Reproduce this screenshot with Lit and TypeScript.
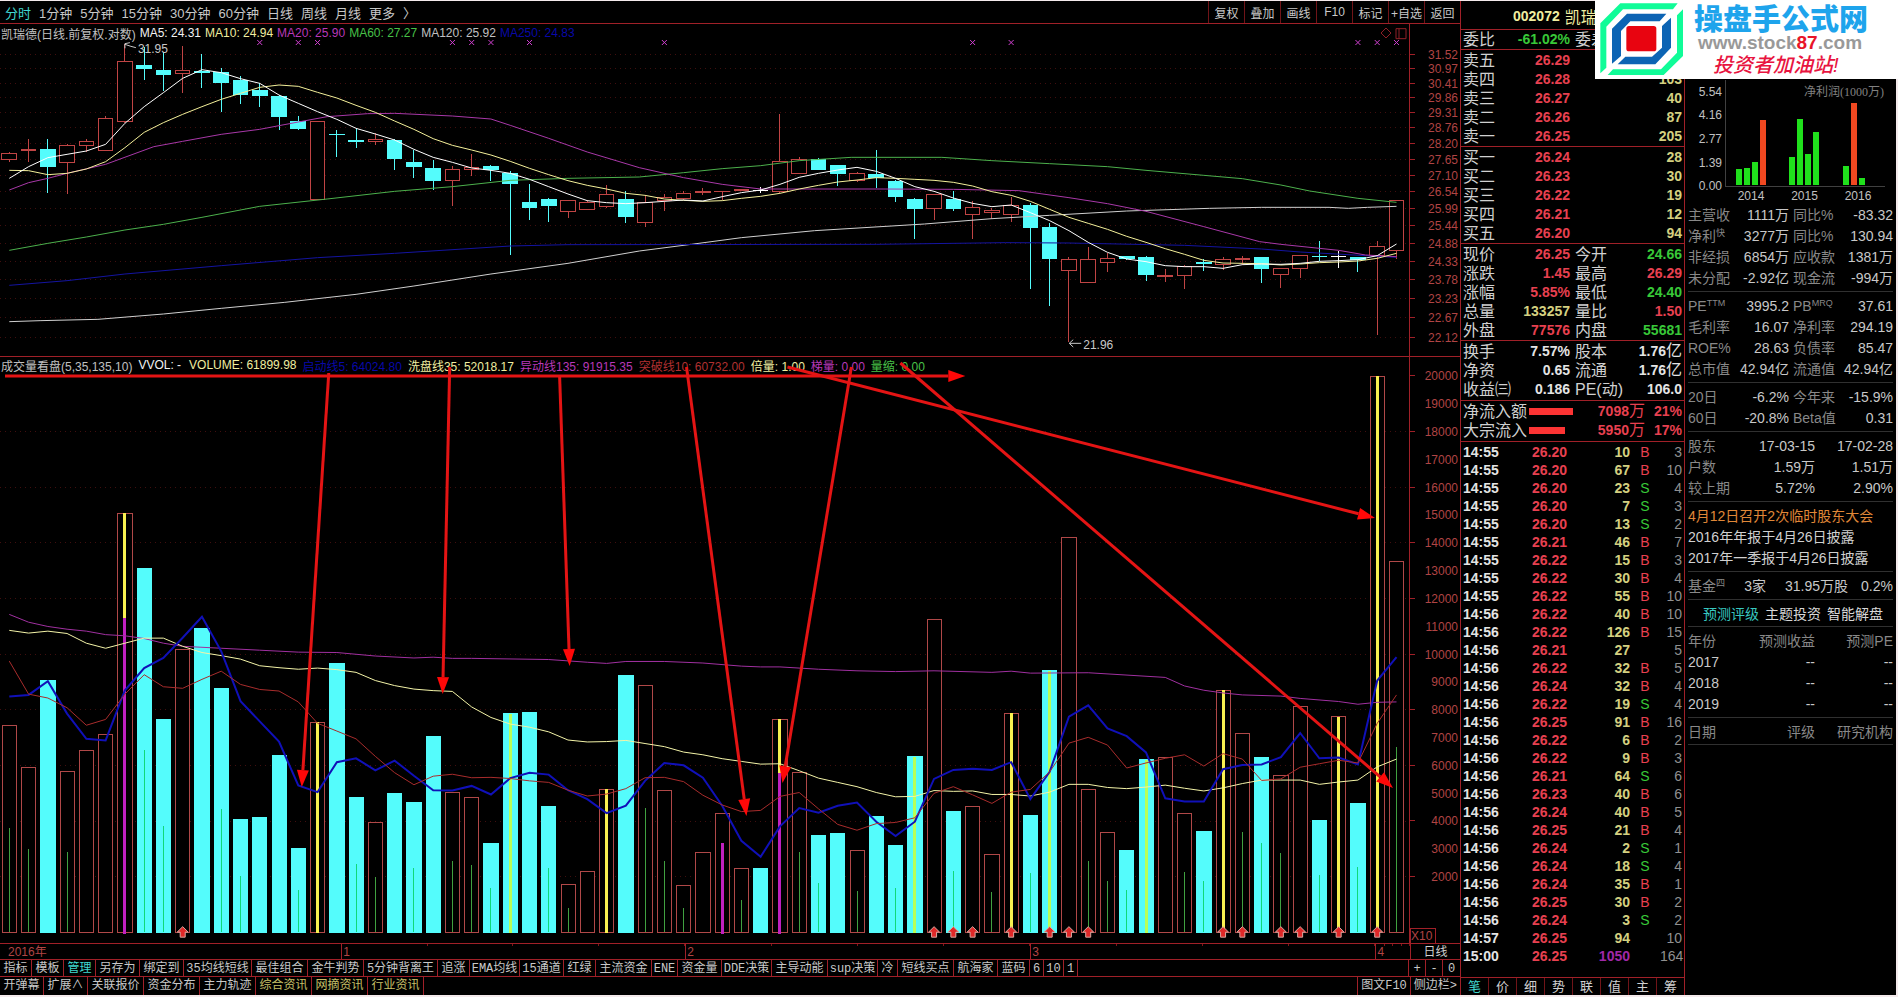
import { LitElement, html, svg, css } from "lit";
import { customElement, state } from "lit/decorators.js";
import { classMap } from "lit/directives/class-map.js";

type Kind = "r" | "c" | "w";
// kind, body top, body bottom, high, low
type Candle = [Kind, number, number, number, number];
// kind, top, extras: g = green needle, y = yellow core, m = magenta core, a = arrow marker
type VolBar = [Kind, number, { g?: number; y?: number; m?: number; a?: number }?];

const STEP = 19.28;
const cx = (i: number) => 9.3 + STEP * i;

const CANDLES: Candle[] = [
  ["r", 460, 479, 455, 485], ["r", 448, 452, 417, 485], ["c", 447, 498, 417, 579], ["r", 436, 488, 432, 582],
  ["r", 423, 437, 417, 455], ["r", 355, 452, 348, 452], ["r", 184, 364, 132, 368], ["c", 195, 204, 140, 240],
  ["c", 210, 224, 155, 272], ["r", 211, 219, 137, 280], ["c", 214, 216, 162, 264], ["c", 216, 246, 205, 336],
  ["c", 240, 282, 228, 312], ["c", 270, 285, 250, 320], ["c", 289, 348, 285, 390], ["c", 364, 384, 348, 390],
  ["r", 364, 598, 364, 598], ["c", 402, 404, 390, 470], ["c", 421, 423, 385, 444], ["r", 418, 425, 400, 434],
  ["c", 421, 474, 418, 510], ["c", 486, 498, 450, 535], ["c", 504, 540, 480, 570], ["r", 508, 542, 498, 618],
  ["r", 502, 508, 463, 528], ["c", 498, 509, 494, 543], ["c", 519, 551, 513, 765], ["c", 606, 621, 552, 660],
  ["c", 597, 617, 594, 665], ["r", 602, 635, 600, 655], ["r", 606, 629, 600, 629], ["r", 583, 620, 555, 625],
  ["c", 597, 650, 572, 669], ["r", 608, 668, 585, 680], ["r", 592, 600, 582, 633], ["r", 579, 594, 572, 600],
  ["r", 575, 578, 565, 585], ["r", 573, 575, 573, 600], ["r", 568, 571, 568, 571], ["w", 570, 572, 560, 580],
  ["r", 484, 574, 342, 580], ["r", 479, 521, 472, 521], ["c", 479, 507, 474, 510], ["c", 495, 521, 495, 558],
  ["r", 520, 541, 515, 547], ["c", 522, 532, 450, 565], ["c", 543, 588, 540, 605], ["c", 597, 624, 594, 717],
  ["r", 583, 626, 583, 660], ["c", 597, 624, 573, 632], ["r", 622, 643, 603, 717], ["r", 632, 636, 625, 658],
  ["r", 615, 643, 590, 665], ["c", 615, 681, 610, 867], ["c", 681, 776, 670, 917], ["r", 778, 811, 770, 1025],
  ["r", 778, 848, 740, 848], ["r", 776, 787, 760, 815], ["c", 768, 776, 768, 780], ["c", 773, 822, 768, 843],
  ["r", 826, 830, 808, 847], ["r", 800, 827, 795, 867], ["c", 786, 791, 778, 812], ["r", 777, 794, 770, 810],
  ["r", 774, 778, 768, 795], ["c", 773, 806, 773, 849], ["r", 806, 823, 806, 863], ["r", 766, 805, 766, 833],
  ["c", 768, 770, 723, 782], ["w", 768, 770, 753, 803], ["c", 771, 777, 771, 815], ["r", 739, 767, 723, 1005],
  ["r", 601, 751, 601, 777],
];

const MA5 = [535, 500, 473, 463, 453, 433, 370, 320, 278, 235, 209, 218, 236, 250, 285, 310, 335, 358, 385, 402, 420, 448, 472, 487, 504, 511, 520, 538, 560, 582, 602, 608, 611, 608, 604, 600, 603, 590, 578, 570, 553, 532, 520, 510, 502, 514, 535, 560, 574, 594, 610, 620, 615, 638, 662, 692, 727, 757, 777, 785, 797, 800, 800, 805, 794, 792, 793, 790, 784, 782, 779, 767, 732];
const MA10 = [511, 512, 524, 520, 507, 485, 443, 397, 368, 343, 320, 298, 280, 262, 255, 259, 277, 294, 316, 337, 363, 388, 416, 436, 450, 465, 484, 505, 524, 542, 556, 567, 580, 586, 597, 601, 604, 602, 595, 589, 580, 567, 556, 546, 540, 533, 535, 538, 541, 547, 558, 575, 586, 604, 628, 652, 670, 688, 709, 727, 746, 763, 781, 789, 790, 791, 795, 792, 788, 786, 783, 775, 760];

type Knots = [number, number][];
const MA20: Knots = [[0, 570], [1, 548], [2, 535], [3, 520], [5, 493], [7.5, 440], [9, 424], [11, 403], [13, 388], [15, 366], [16.5, 350], [18.6, 341], [20, 340], [23, 348], [25, 357], [26, 376], [28, 415], [30, 456], [32.7, 503], [35, 533], [37, 553], [39, 567], [45.4, 567], [49, 568], [52.4, 572], [55, 593], [57, 611], [59, 634], [62, 680], [64.9, 725], [66, 733], [69, 751], [70.4, 765], [72, 770]];
const MA60: Knots = [[0, 751], [2, 730], [4, 711], [6, 690], [8, 673], [10, 652], [13, 619], [16.5, 597], [20, 574], [23, 560], [26, 541], [29, 535], [32.7, 531], [35, 518], [37, 506], [39, 497], [41, 482], [43.7, 472], [48.4, 472], [51, 482], [54, 491], [57, 500], [59, 511], [62, 526], [64, 536], [66, 555], [67.5, 573], [70, 595], [72, 607]];
const MA120: Knots = [[0, 965], [1.6, 962], [4.6, 958], [8, 942], [11, 925], [14.3, 907], [18, 883], [21, 858], [25, 822], [29, 790], [32.7, 753], [35.4, 733], [38, 713], [41.8, 692], [47.5, 672], [51, 656], [54, 646], [58, 633], [62.3, 625], [65, 622], [68.5, 622], [69.5, 625], [70.5, 622], [72, 619]];
const MA250: Knots = [[0, 856], [3, 842], [6, 822], [11, 797], [16, 773], [20, 760], [26, 738], [29, 734], [45, 733], [51.7, 728], [55, 729], [61, 736], [65, 747], [67, 756], [70.4, 767], [72, 772]];

const VOLS: VolBar[] = [
  ["r", 965, { g: 1230 }], ["r", 1073, { g: 1283 }], ["c", 851], ["r", 1083, { g: 1290 }], ["r", 1031], ["r", 990],
  ["r", 420, { y: 1, m: 689 }], ["c", 563, { g: 1028 }], ["c", 951, { g: 1225 }], ["r", 769, { a: 1 }], ["c", 715],
  ["c", 871, { g: 1180 }], ["c", 1208, { g: 1352 }], ["c", 1203], ["c", 1044], ["c", 1283, { g: 1388 }], ["r", 957, { y: 1 }],
  ["c", 807], ["c", 1152, { g: 1322 }], ["r", 1214, { g: 1355 }], ["c", 1141], ["c", 1164, { g: 1332 }], ["c", 995],
  ["r", 1137, { g: 1315 }], ["r", 1152, { g: 1325 }], ["c", 1270, { g: 1383 }], ["c", 936, { y: 1 }], ["c", 931],
  ["c", 1175, { g: 1333 }], ["r", 1374, { g: 1435 }], ["r", 1342], ["r", 1129, { y: 1 }], ["c", 838], ["r", 862, { g: 1177 }],
  ["r", 1132, { g: 1313 }], ["r", 1376, { g: 1435 }], ["r", 1291], ["r", 1191, { m: 1267 }], ["r", 1334, { g: 1415 }],
  ["c", 1334], ["r", 949, { y: 1, m: 1088 }], ["r", 1087, { g: 1290 }], ["c", 1249, { g: 1370 }], ["c", 1244],
  ["r", 1286, { g: 1390 }], ["c", 1200], ["c", 1275, { g: 1383 }], ["c", 1046, { y: 1 }], ["r", 692, { a: 1 }],
  ["c", 1188, { g: 1340, a: 1 }], ["r", 1173, { a: 1 }], ["r", 1297, { g: 1395 }], ["r", 934, { y: 1, a: 1 }],
  ["c", 1198, { g: 1345 }], ["c", 825, { y: 1, a: 1 }], ["r", 482, { a: 1 }], ["r", 1129, { g: 1313, a: 1 }],
  ["r", 1240, { g: 1365 }], ["c", 1288, { g: 1388 }], ["c", 1054, { y: 1 }], ["r", 1047], ["r", 1191, { g: 1342 }],
  ["c", 1239, { g: 1365 }], ["r", 875, { y: 1, a: 1 }], ["r", 985, { g: 1240, a: 1 }], ["c", 1049, { g: 1268 }],
  ["r", 1093, { g: 1293, a: 1 }], ["r", 918, { a: 1 }], ["c", 1211, { g: 1350 }], ["r", 943, { y: 1, a: 1 }],
  ["c", 1167, { g: 1330 }], ["r", 67, { y: 1, a: 1 }], ["r", 543, { g: 1020 }],
];

const V5 = [891, 887, 852, 935, 1000, 1004, 875, 818, 792, 740, 686, 775, 903, 955, 1007, 1120, 1137, 1060, 1050, 1081, 1056, 1095, 1132, 1133, 1121, 1143, 1101, 1087, 1092, 1132, 1155, 1191, 1172, 1108, 1062, 1068, 1100, 1172, 1262, 1303, 1225, 1178, 1190, 1172, 1164, 1213, 1250, 1213, 1103, 1080, 1077, 1080, 1060, 1155, 1085, 943, 914, 973, 993, 1035, 1153, 1161, 1161, 1078, 1067, 1066, 1047, 985, 1050, 1048, 1066, 850, 790];
const V35 = [721, 728, 723, 729, 754, 767, 754, 741, 741, 762, 778, 786, 795, 812, 817, 821, 818, 822, 829, 850, 863, 872, 876, 878, 918, 945, 962, 970, 982, 1003, 1008, 1007, 1004, 1012, 1020, 1034, 1041, 1051, 1058, 1065, 1064, 1082, 1101, 1112, 1123, 1138, 1149, 1148, 1133, 1135, 1134, 1143, 1143, 1147, 1137, 1117, 1117, 1125, 1128, 1124, 1119, 1127, 1134, 1126, 1115, 1106, 1106, 1106, 1117, 1111, 1106, 1072, 1052];
const V10 = [800, 885, 895, 920, 965, 950, 885, 835, 866, 870, 847, 826, 860, 873, 877, 905, 960, 980, 1000, 1045, 1087, 1118, 1096, 1091, 1100, 1099, 1102, 1108, 1112, 1132, 1147, 1142, 1128, 1100, 1099, 1110, 1145, 1170, 1187, 1184, 1148, 1138, 1180, 1220, 1235, 1218, 1215, 1203, 1140, 1123, 1144, 1166, 1137, 1130, 1085, 1011, 996, 1016, 1075, 1062, 1050, 1041, 1070, 1038, 1052, 1107, 1103, 1073, 1064, 1055, 1062, 960, 887];
const V135: Knots = [[0, 680], [1, 700], [2, 711], [3, 718], [4, 723], [5, 732], [6, 735], [7, 742], [8, 754], [9, 762], [11, 767], [13, 772], [15, 777], [17, 778], [19, 787], [21, 792], [22, 790], [23, 793], [24, 793], [28, 796], [30, 803], [31, 806], [32, 801], [34, 801], [36, 805], [38, 813], [39, 815], [40, 815], [42, 821], [44, 825], [46, 827], [48, 825], [51, 829], [52, 826], [53, 831], [56, 830], [60, 842], [61, 864], [62, 875], [63, 882], [64, 887], [66, 890], [67, 896], [69, 904], [70, 911], [71, 906], [72, 905]];

const CROSSES = [13, 15, 16, 23, 24, 25, 27, 34, 50, 52, 70, 71, 72];

const PRICE_TICKS = [31.52, 30.97, 30.41, 29.86, 29.31, 28.76, 28.2, 27.65, 27.1, 26.54, 25.99, 25.44, 24.88, 24.33, 23.78, 23.23, 22.67, 22.12];
const VOL_TICKS = Array.from({ length: 19 }, (_, i) => 20000 - i * 1000);
const priceY = (p: number) => 30.5 + 799 * Math.log(31.52 / p);
const volY = (v: number) => 575.3 - v * 0.02783;

// hand-drawn arrows: start x, y, end x, y
const ARROWS = [
  [5, 19, 966, 19], [329, 16, 302, 430], [450, 10, 443, 337], [560, 19, 570, 309],
  [687, 10, 747, 459], [852, 10, 783, 426], [788, 10, 1376, 161], [901, 6, 1394, 431],
];

const BOOK_SELL = [["卖五", "26.29", ""], ["卖四", "26.28", "103"], ["卖三", "26.27", "40"], ["卖二", "26.26", "87"], ["卖一", "26.25", "205"]];
const BOOK_BUY = [["买一", "26.24", "28"], ["买二", "26.23", "30"], ["买三", "26.22", "19"], ["买四", "26.21", "12"], ["买五", "26.20", "94"]];

const STATS = [
  ["现价", "26.25", "r", "今开", "24.66", "g"], ["涨跌", "1.45", "r", "最高", "26.29", "r"], ["涨幅", "5.85%", "r", "最低", "24.40", "g"],
  ["总量", "133257", "y", "量比", "1.50", "r"], ["外盘", "77576", "r", "内盘", "55681", "g"],
];
const STATS2 = [["换手", "7.57%", "w", "股本", "1.76亿", "w"], ["净资", "0.65", "w", "流通", "1.76亿", "w"], ["收益㈢", "0.186", "w", "PE(动)", "106.0", "w"]];

const TRADES = `14:55 26.20 10 B 3|14:55 26.20 67 B 10|14:55 26.20 23 S 4|14:55 26.20 7 S 3|14:55 26.20 13 S 2|14:55 26.21 46 B 7|14:55 26.22 15 B 3|14:55 26.22 30 B 4|14:55 26.22 55 B 10|14:56 26.22 40 B 10|14:56 26.22 126 B 15|14:56 26.21 27 - 5|14:56 26.22 32 B 5|14:56 26.24 32 B 4|14:56 26.22 19 S 4|14:56 26.25 91 B 16|14:56 26.22 6 B 2|14:56 26.22 9 B 3|14:56 26.21 64 S 6|14:56 26.23 40 B 6|14:56 26.24 40 B 5|14:56 26.25 21 B 4|14:56 26.24 2 S 1|14:56 26.24 18 S 4|14:56 26.24 35 B 1|14:56 26.25 30 B 2|14:56 26.24 3 S 2|14:57 26.25 94 - 10|15:00 26.25 1050 - 164`
  .split("|").map((r) => r.split(" "));

const INDICATORS = ["指标", "模板", "管理", "另存为", "绑定到", "35均线短线", "最佳组合", "金牛判势", "5分钟背离王", "追涨", "EMA均线", "15通道", "红绿", "主流资金", "ENE", "资金量", "DDE决策", "主导动能", "sup决策", "冷", "短线买点", "航海家", "蓝码", "6", "10", "1"];
const LINKS = ["开弹幕", "扩展∧", "关联报价", "资金分布", "主力轨迹", "综合资讯", "网摘资讯", "行业资讯"];

// button width in half-width character cells of 6px plus the side padding
const cellWidth = (s: string) => [...s].reduce((n, c) => n + (c.charCodeAt(0) > 255 ? 12 : 6), 8);

const points = (k: Knots) => k.map(([i, y]) => `${cx(i).toFixed(1)},${y}`).join(" ");
const series = (v: number[]) => points(v.map((y, i) => [i, y] as [number, number]));

@customElement("stock-price-chart")
class PriceChart extends LitElement {
  static styles = css`
    :host { display: flex; height: 332px; }
    .plot { flex: 1; min-width: 0; display: grid; position: relative; overflow: hidden; }
    .plot > svg, .plot > .legend { grid-area: 1 / 1; }
    .plot > svg { width: 100%; height: 332px; display: block; }
    .legend { display: flex; gap: 4px; padding: 0 0 0 1px; height: 18px; align-items: center; font-size: 12px; white-space: nowrap; z-index: 1; align-self: start; }
    .axis { width: 50px; flex: none; border-left: 1px solid #a02028; }
    .axis text { font-size: 12px; fill: #b04444; text-anchor: end; }
    .axis line { stroke: #a02028; }
    .gray { color: #c0c0c0; } .white { color: #f2f2f2; } .yellow { color: #f0eea0; } .mag { color: #b838b8; }
    .green { color: #48c048; } .blue { color: #0808a8; }
    .grid line { stroke: #400e0e; stroke-dasharray: 1 4; }
    .crisp { shape-rendering: crispEdges; }
    .r { stroke: #c04444; fill: #000; } .c { stroke: #54fcfc; fill: #54fcfc; } .w { stroke: #fff; fill: #fff; }
    svg * { vector-effect: non-scaling-stroke; }
    polyline { fill: none; }
    .l5 { stroke: #fff; } .l10 { stroke: #f4f09a; } .l20 { stroke: #a838a8; } .l60 { stroke: #4cb04c; } .l120 { stroke: #d0d0d0; } .l250 { stroke: #1414a0; }
    .cross { stroke: #d040d0; fill: none; }
    .tool { stroke: #902028; fill: none; }
    .note { position: absolute; font-size: 12px; line-height: 14px; color: #c8c8c8; }
    .lead { stroke: #c8c8c8; fill: none; }
  `;
  render() {
    return html`
      <div class="plot">
        <div class="legend">
          <span class="gray">凯瑞德(日线.前复权.对数)</span><span class="white">MA5: 24.31</span><span class="yellow">MA10: 24.94</span>
          <span class="mag">MA20: 25.90</span><span class="green">MA60: 27.27</span><span class="gray">MA120: 25.92</span><span class="blue">MA250: 24.83</span>
        </div>
        <svg viewBox="0 72 1410 996" preserveAspectRatio="none">
          <g class="grid crisp">${PRICE_TICKS.map((p) => svg`<line x1="0" x2="1410" y1=${72 + priceY(p) * 3} y2=${72 + priceY(p) * 3}></line>`)}</g>
          <g class="crisp">${CANDLES.map(([k, t, b, h, l], i) => svg`
            <g class=${k}>
              <line x1=${cx(i)} x2=${cx(i)} y1=${h} y2=${t}></line><line x1=${cx(i)} x2=${cx(i)} y1=${b} y2=${l}></line>
              <rect x=${cx(i) - 7.3} y=${t} width="14.6" height=${b - t}></rect>
            </g>`)}</g>
          <polyline class="l120" points=${points(MA120)}></polyline>
          <polyline class="l250" points=${points(MA250)}></polyline>
          <polyline class="l60" points=${points(MA60)}></polyline>
          <polyline class="l20" points=${points(MA20)}></polyline>
          <polyline class="l10" points=${series(MA10)}></polyline>
          <polyline class="l5" points=${series(MA5)}></polyline>
          ${CROSSES.map((i) => svg`<path class="cross" d="M${cx(i) - 2.5} 120l5 15m0 -15l-5 15"></path>`)}
          <path class="lead" d="M125 133l6 6l5 4M125 145v-14l5 -3"></path>
          <path class="lead" d="M1070 1030h12M1070 1030l4 -11M1070 1030l4 11"></path>
          <path class="tool" d="M1387 84l5 15l-5 15l-5 -15zM1397 86h10v30h-10zM1400 86v30"></path>
        </svg>
        <span class="note" style="left:${(138 / 1410) * 100}%;top:18px">31.95</span>
        <span class="note" style="left:${(1084 / 1410) * 100}%;top:314px">21.96</span>
      </div>
      <svg class="axis" height="332">
        ${PRICE_TICKS.map((p) => svg`<line class="crisp" x1="0" x2="5" y1=${priceY(p)} y2=${priceY(p)}></line><text x="48" y=${priceY(p) + 4.5}>${p.toFixed(2)}</text>`)}
      </svg>`;
  }
}

@customElement("stock-volume-chart")
class VolumeChart extends LitElement {
  static styles = css`
    :host { display: flex; height: 586px; }
    .plot { flex: 1; min-width: 0; display: grid; }
    .plot > * { grid-area: 1 / 1; }
    .plot > svg { width: 100%; height: 586px; display: block; }
    .legend { display: flex; gap: 6px; padding-left: 1px; height: 16px; align-items: center; font-size: 12px; white-space: nowrap; align-self: start; }
    .vvol { padding-right: 2px; }
    .gray { color: #c0c0c0; } .white { color: #f2f2f2; } .yellow { color: #f0eea0; } .mag { color: #b838b8; }
    .green { color: #48c048; } .blue { color: #0808a8; } .red { color: #b03030; }
    .axis { width: 50px; flex: none; border-left: 1px solid #a02028; }
    .axis text { font-size: 12px; fill: #b04444; text-anchor: end; }
    .axis line, .axis rect { stroke: #a02028; fill: none; }
    .axis .unit { text-anchor: start; }
    .grid line { stroke: #400e0e; stroke-dasharray: 1 4; }
    .crisp { shape-rendering: crispEdges; }
    .plot svg * { vector-effect: non-scaling-stroke; }
    .r { stroke: #b04848; fill: #000; } .c { stroke: #54fcfc; fill: #54fcfc; }
    .yc { stroke: #f8f050; stroke-width: 3; } .yo { stroke: #b8ff58; stroke-width: 3; } .mc { stroke: #c020c0; stroke-width: 3; }
    .gn { stroke: #40a040; } .go { stroke: #10d878; }
    polyline { fill: none; }
    .v5 { stroke: #1010b8; stroke-width: 2; } .v35 { stroke: #f4f4a8; } .v135 { stroke: #a030a0; } .v10 { stroke: #a82c2c; }
    .up { fill: #e02828; stroke: #d8a8a0; }
    .arrow line { stroke: #e41414; stroke-width: 3; } .arrow polygon { fill: #ff0808; }
  `;
  render() {
    return html`
      <div class="plot">
        <svg viewBox="0 18 1410 1507" preserveAspectRatio="none">
          <g class="grid crisp">${VOL_TICKS.filter((v) => v % 2000 === 0 && v < 20000).map((v) => {
            const y = 18 + volY(v) * 2.572;
            return svg`<line x1="0" x2="1410" y1=${y} y2=${y}></line>`;
          })}</g>
          <g class="crisp">${VOLS.map(([k, t, o = {}], i) => {
            const x = cx(i);
            return svg`
              <rect class=${k} x=${x - 7} y=${t} width="14.2" height=${1498 - t}></rect>
              ${o.g ? svg`<line class=${k === "c" ? "go" : "gn"} x1=${x} x2=${x} y1=${o.g} y2="1496"></line>` : ""}
              ${o.y ? svg`<line class=${k === "c" ? "yo" : "yc"} x1=${x} x2=${x} y1=${t} y2="1499"></line>` : ""}
              ${o.m ? svg`<line class="mc" x1=${x} x2=${x} y1=${o.m} y2="1501"></line>` : ""}`;
          })}</g>
          <polyline class="v135" points=${points(V135)}></polyline>
          <polyline class="v35" points=${series(V35)}></polyline>
          <polyline class="v5" points=${series(V5)}></polyline>
          <polyline class="v10" points=${series(V10)}></polyline>
          ${VOLS.map(([, , o = {}], i) => (o.a ? svg`<path class="up" d="M${cx(i)} 1483l5.5 14h-3v13h-5v-13h-3z"></path>` : ""))}
        </svg>
        <div class="legend">
          <span class="gray">成交量看盘(5,35,135,10)</span><span class="white vvol">VVOL: -</span><span class="yellow">VOLUME: 61899.98</span>
          <span class="blue">启动线5: 64024.80</span><span class="yellow">洗盘线35: 52018.17</span><span class="mag">异动线135: 91915.35</span>
          <span class="red">突破线10: 60732.00</span><span class="yellow">倍量: 1.00</span><span class="mag">梯量: 0.00</span><span class="green">量缩: 0.00</span>
        </div>
        <svg class="arrow" viewBox="0 0 1410 586" preserveAspectRatio="none">
          ${ARROWS.map(([x1, y1, x2, y2]) => {
            const d = Math.hypot(x2 - x1, y2 - y1), ux = (x2 - x1) / d, uy = (y2 - y1) / d;
            const bx = x2 - ux * 17, by = y2 - uy * 17;
            return svg`<line x1=${x1} y1=${y1} x2=${bx} y2=${by}></line>
              <polygon points="${x2},${y2} ${bx - uy * 6},${by + ux * 6} ${bx + uy * 6},${by - ux * 6}"></polygon>`;
          })}
        </svg>
      </div>
      <svg class="axis" height="586">
        ${VOL_TICKS.map((v) => svg`
          ${v % 2000 === 0 ? svg`<line class="crisp" x1="0" x2="5" y1=${volY(v)} y2=${volY(v)}></line>` : ""}
          <text x="48" y=${volY(v) + 4.5}>${v}</text>`)}
        <rect class="crisp" x="0" y="571" width="25" height="15"></rect><text class="unit" x="1" y="583">X10</text>
      </svg>`;
  }
}

@customElement("site-logo")
class SiteLogo extends LitElement {
  static styles = css`
    :host { display: flex; gap: 10px; background: #fff; width: 303px; height: 79px; box-sizing: border-box; padding: 3px 0 0 5px; }
    svg { width: 84px; height: 73px; flex: none; }
    .words { display: flex; flex-direction: column; }
    .name { font-size: 29px; line-height: 32px; font-weight: 900; color: #1ea4ec; padding-top: 1px; }
    .url { font-size: 19px; line-height: 14px; font-weight: bold; color: #999; padding-left: 4px; }
    .url b { color: #e81428; }
    .slogan { font-size: 20px; line-height: 30px; font-style: italic; font-weight: 500; color: #e81440; padding-left: 19px; }
  `;
  render() {
    return html`
      <svg viewBox="59 11 252 219">
        <path fill="#10fc98" d="M120 12H292L278 30H128L78 82V205L60 222V72zM308 30V170L250 227H82L98 210H242L290 160V48z"></path>
        <path fill="#0c64b4" d="M140 43H258L238 66H150L122 95V170L95 193V88zM272 55V145L225 195H112L135 172H215L245 145V80z"></path>
        <rect x="138" y="80" width="90" height="76" rx="8" fill="#e80410"></rect>
      </svg>
      <div class="words">
        <span class="name">操盘手公式网</span>
        <span class="url">www.stock<b>87</b>.com</span>
        <span class="slogan">投资者加油站!</span>
      </div>`;
  }
}

@customElement("quote-panel")
class QuotePanel extends LitElement {
  static styles = css`
    :host { display: flex; flex-direction: column; border-right: 1px solid #a02028; color: #d0d0d0; font-size: 16px; min-width: 0; }
    .title { height: 26px; border-bottom: 1px solid #a02028; display: flex; align-items: center; padding: 2px 0 0 52px; gap: 5px; color: #f0eea0; white-space: nowrap; }
    .title b, .n { font-size: 14px; font-weight: bold; }
    table { width: 100%; border-spacing: 0; table-layout: fixed; border-bottom: 1px solid #a02028; padding-top: 1px; }
    td, th { padding: 0; height: 19px; line-height: 19px; white-space: nowrap; text-align: right; overflow: visible; font-weight: normal; }
    th { text-align: left; padding-left: 2px; }
    td:last-child { padding-right: 2px; }
    .top { padding-top: 0; }
    .second { padding-left: 5px; }
    .loose { padding-bottom: 1px; }
    .c50 { width: 50px; } .c59 { width: 59px; } .c56 { width: 56px; } .c63 { width: 63px; } .c30 { width: 30px; } .c68 { width: 68px; } .c48 { width: 48px; }
    .r { color: #e84050; } .g { color: #38c838; } .y { color: #d4d080; } .w { color: #e4e4e4; }
    .n.m { color: #a028a8; }
    .cjk { font-size: 16px; font-weight: normal; line-height: 0; }
    .bar { height: 7px; background: #fc3434; }
    .trades { border-bottom: 0; }
    .trades td { height: 18px; line-height: 18px; font-size: 14px; }
    .trades .time { text-align: left; padding-left: 2px; }
    .trades .side { text-align: center; }
    .cnt { color: #909090; }
    .tabs { display: flex; margin-top: auto; height: 17px; border-top: 1px solid #a02028; }
    .tabs button { flex: 1; border: 0; border-right: 1px solid #701418; background: none; color: #d0d0d0; font: inherit; font-size: 13px; line-height: 17px; padding: 0; }
    .tabs button:last-child { border-right: 0; }
    .tabs .on { color: #40d8d0; }
  `;
  private book(rows: string[][]) {
    return html`<table>
      <colgroup><col class="c50" /><col class="c59" /><col /></colgroup>
      ${rows.map(([a, p, q]) => html`<tr><th scope="row">${a}</th><td class="n r">${p}</td><td class="n y">${q}</td></tr>`)}
    </table>`;
  }
  private stats(rows: string[][], loose = false) {
    return html`<table class=${classMap({ loose })}>
      <colgroup><col class="c50" /><col class="c59" /><col class="c48" /><col /></colgroup>
      ${rows.map(([a, v, k, b, v2, k2]) => html`<tr>
        <th scope="row">${a}</th><td class="n ${k}">${v}</td>
        <th class="second" scope="row">${b}</th>
        <td class="n ${k2}">${v2.replace("亿", "")}${v2.endsWith("亿") ? html`<span class="cjk">亿</span>` : ""}</td>
      </tr>`)}
    </table>`;
  }
  render() {
    return html`
      <div class="title"><b>002072</b><span>凯瑞德</span></div>
      <table class="top">
        <colgroup><col class="c50" /><col class="c59" /><col class="c48" /><col /></colgroup>
        <tr><th scope="row">委比</th><td class="n g">-61.02%</td><th class="second" scope="row">委差</th><td></td></tr>
      </table>
      ${this.book(BOOK_SELL)} ${this.book(BOOK_BUY)} ${this.stats(STATS)} ${this.stats(STATS2, true)}
      <table class="loose">
        <colgroup><col class="c68" /><col class="c48" /><col class="c68" /><col /></colgroup>
        ${[["净流入额", 44, "7098", "21%"], ["大宗流入", 36, "5950", "17%"]].map(([a, w, v, p]) => html`<tr>
          <th scope="row">${a}</th><td><div class="bar" style="width:${w}px"></div></td>
          <td class="n r">${v}<span class="cjk">万</span></td><td class="n r">${p}</td></tr>`)}
      </table>
      <table class="trades">
        <colgroup><col class="c50" /><col class="c56" /><col class="c63" /><col class="c30" /><col /></colgroup>
        ${TRADES.map(([t, p, q, s, c]) => html`<tr>
          <td class="n w time">${t}</td><td class="n r">${p}</td>
          <td class="n ${q === "1050" ? "m" : "y"}">${q}</td>
          <td class="side ${s === "B" ? "r" : "g"}">${s === "-" ? "" : s}</td><td class="cnt">${c}</td></tr>`)}
      </table>
      <div class="tabs">${["笔", "价", "细", "势", "联", "值", "主", "筹"].map((t, i) => html`<button class=${i ? "" : "on"}>${t}</button>`)}</div>`;
  }
}

@customElement("finance-panel")
class FinancePanel extends LitElement {
  static styles = css`
    :host { display: block; color: #c8c8c8; font-size: 14px; min-width: 0; }
    .mini { display: block; width: 100%; height: 204px; }
    .mini text { font-size: 12px; fill: #c0c0c0; text-anchor: end; }
    .mini .year { text-anchor: middle; }
    .mini .cap { fill: #808080; font-family: "Liberation Serif", "Noto Sans CJK SC", serif; font-size: 12px; }
    .mini line { stroke: #404040; shape-rendering: crispEdges; }
    table { width: calc(100% - 6px); margin: 0 3px; border-spacing: 0; table-layout: fixed; border-bottom: 1px solid #303030; padding: 4px 0 2px; }
    .first { padding-top: 0; }
    .headonly { padding-top: 4px; padding-bottom: 1px; }
    td, th { padding: 0; height: 21px; line-height: 21px; text-align: right; white-space: nowrap; font-weight: normal; }
    th { color: #888; }
    th:first-child { text-align: left; }
    td:first-child { text-align: left; }
    th.second { text-align: left; padding-left: 4px; }
    sup { font-size: 9px; line-height: 0; vertical-align: 5px; }
    .c45 { width: 45px; } .c56 { width: 56px; } .c78 { width: 78px; } .c49 { width: 49px; } .c82 { width: 82px; } .c44 { width: 44px; } .c34 { width: 34px; }
    .news { margin: 0 3px; padding: 4px 0 2px; border-bottom: 1px solid #303030; display: flex; flex-direction: column; }
    .news a { color: #d0d0d0; text-decoration: none; line-height: 21px; white-space: nowrap; }
    .news .hot { color: #e08838; }
    .tabs { margin: 0 3px; border-bottom: 1px solid #303030; height: 26px; display: flex; gap: 6px; padding-left: 15px; align-items: center; }
    .tabs button { border: 0; background: none; padding: 0; font: inherit; color: #d8d8d8; white-space: nowrap; }
    .tabs .on { color: #38c8c0; }
  `;
  private four(rows: any[][], cls = "") {
    return html`<table class=${cls}>
      <colgroup><col class="c45" /><col class="c56" /><col class="c49" /><col /></colgroup>
      ${rows.map(([a, b, c, d]) => html`<tr><th scope="row">${a}</th><td>${b}</td><th class="second" scope="row">${c}</th><td>${d}</td></tr>`)}
    </table>`;
  }
  render() {
    const bars: [number, number, string][] = [
      [51, 169, "g"], [59, 168, "g"], [67, 162, "g"], [75, 120, "o"], [104, 157, "g"], [112, 119, "g"], [120, 154, "g"], [128, 132, "g"],
      [158, 166, "g"], [166, 103, "o"], [174, 178, "g"],
    ];
    return html`
      <svg class="mini" viewBox="0 1 211 204" preserveAspectRatio="xMinYMin meet">
        <line x1="40.5" x2="40.5" y1="80" y2="186"></line><line x1="40" x2="200" y1="186.5" y2="186.5"></line>
        ${["5.54", "4.16", "2.77", "1.39", "0.00"].map((t, i) => svg`<text x="37" y=${95.5 + i * 23.7}>${t}</text>`)}
        <text class="cap" x="199" y="96">净利润(1000万)</text>
        ${bars.map(([x, y, c]) => svg`<rect x=${x} y=${y} width="6" height=${185 - y} fill=${c === "g" ? "#20e01c" : "#f04820"}></rect>`)}
        ${["2014", "2015", "2016"].map((t, i) => svg`<text class="year" x=${66 + i * 53.5} y="200">${t}</text>`)}
      </svg>
      ${this.four([["主营收", "1111万", "同比%", "-83.32"], [html`净利<sup>快</sup>`, "3277万", "同比%", "130.94"], ["非经损", "6854万", "应收款", "1381万"], ["未分配", "-2.92亿", "现金流", "-994万"]], "first")}
      ${this.four([[html`PE<sup>TTM</sup>`, "3995.2", html`PB<sup>MRQ</sup>`, "37.61"], ["毛利率", "16.07", "净利率", "294.19"], ["ROE%", "28.63", "负债率", "85.47"], ["总市值", "42.94亿", "流通值", "42.94亿"]])}
      ${this.four([["20日", "-6.2%", "今年来", "-15.9%"], ["60日", "-20.8%", "Beta值", "0.31"]])}
      <table>
        <colgroup><col class="c49" /><col class="c78" /><col /></colgroup>
        ${[["股东", "17-03-15", "17-02-28"], ["户数", "1.59万", "1.51万"], ["较上期", "5.72%", "2.90%"]].map(([a, b, c]) => html`<tr><th scope="row">${a}</th><td>${b}</td><td>${c}</td></tr>`)}
      </table>
      <div class="news">
        <a class="hot" href="#">4月12日召开2次临时股东大会</a><a href="#">2016年年报于4月26日披露</a><a href="#">2017年一季报于4月26日披露</a>
      </div>
      <table>
        <colgroup><col class="c44" /><col class="c34" /><col class="c82" /><col /></colgroup>
        <tr><th scope="row">基金<sup>四</sup></th><td>3家</td><td>31.95万股</td><td>0.2%</td></tr>
      </table>
      <div class="tabs"><button class="on">预测评级</button><button>主题投资</button><button>智能解盘</button></div>
      <table>
        <colgroup><col class="c49" /><col class="c78" /><col /></colgroup>
        <tr><th>年份</th><th>预测收益</th><th>预测PE</th></tr>
        ${["2017", "2018", "2019"].map((y) => html`<tr><td>${y}</td><td>--</td><td>--</td></tr>`)}
      </table>
      <table class="headonly">
        <colgroup><col class="c49" /><col class="c78" /><col /></colgroup>
        <tr><th>日期</th><th>评级</th><th>研究机构</th></tr>
      </table>`;
  }
}

@customElement("app-root")
class AppRoot extends LitElement {
  @state() private period = "分时";
  static styles = css`
    :host { display: block; position: relative; background: #f4eaec; font-family: "Liberation Sans", "Noto Sans CJK SC", sans-serif; min-height: 100vh; box-sizing: border-box; }
    .page { display: grid; grid-template-columns: minmax(0, 1fr) 224px 211px; padding: 1px 2px 2px 0; min-height: 100vh; box-sizing: border-box; }
    .main { border-right: 1px solid #a02028; background: #000; min-width: 0; display: flex; flex-direction: column; }
    quote-panel, finance-panel { background: #000; }
    button { background: none; border: 0; padding: 0; font: inherit; color: #c8c8c8; white-space: nowrap; flex: none; }
    .toolbar { display: flex; height: 22px; border-bottom: 1px solid #a02028; padding-left: 5px; font-size: 13px; }
    .periods { display: flex; gap: 8px; align-items: center; }
    .on, .row .on { color: #40d8d0; }
    .tools { display: flex; margin-left: auto; }
    .tools button { width: 36px; border-left: 1px solid #701418; font-size: 12px; }
    stock-price-chart, stock-volume-chart { border-bottom: 1px solid #a02028; }
    .months { display: flex; height: 15px; border-bottom: 1px solid #a02028; font-size: 12px; line-height: 17px; color: #b04444; }
    .months div { border-left: 1px solid #a02028; box-sizing: border-box; padding-left: 1px; background: repeating-linear-gradient(90deg, transparent 0 calc(25% - 1px), #801418 calc(25% - 1px) 25%) 0 0 / 100% 2px no-repeat; }
    .months .start { padding-left: 8px; border: 0; background: none; }
    .months .kind { width: 50px; flex: none; padding: 0; text-align: center; color: #d0d0d0; background: none; }
    .row { display: flex; height: 16px; border-bottom: 1px solid #a02028; font-family: "Liberation Mono", "Noto Sans CJK SC", monospace; font-size: 12px; }
    .row.last { height: 18px; border-bottom: 0; }
    .row button { border-right: 1px solid #a02028; box-sizing: border-box; line-height: 18px; overflow: hidden; text-align: center; }
    .row .news { color: #c8c068; }
    .row .end { margin-left: auto; display: flex; border-left: 1px solid #a02028; }
    .row .end button:last-child { border-right: 0; }
    .zoom button { width: 17px; }
    .side button { padding: 0 3px; }
    site-logo { position: absolute; top: 0; right: 0; }
  `;
  render() {
    const spans: [string, number][] = [["2016年", 337], ["1", 346], ["2", 347], ["3", 347], ["4", 33]];
    return html`
      <div class="page">
        <main class="main">
          <div class="toolbar">
            <div class="periods">
              ${["分时", "1分钟", "5分钟", "15分钟", "30分钟", "60分钟", "日线", "周线", "月线", "更多", "〉"].map(
                (p) => html`<button class=${classMap({ on: p === this.period })} @click=${() => (this.period = p)}>${p}</button>`)}
            </div>
            <div class="tools">${["复权", "叠加", "画线", "F10", "标记", "+自选", "返回"].map((t) => html`<button>${t}</button>`)}</div>
          </div>
          <stock-price-chart></stock-price-chart>
          <stock-volume-chart></stock-volume-chart>
          <div class="months">
            ${spans.map(([t, w], i) => html`<div class=${i ? "" : "start"} style="flex:${w} 1 0">${t}</div>`)}
            <div class="kind">日线</div>
          </div>
          <div class="row">
            ${INDICATORS.map((t) => html`<button class=${t === "管理" ? "on" : ""} style="width:${cellWidth(t)}px">${t}</button>`)}
            <div class="end zoom"><button>+</button><button>-</button><button>0</button></div>
          </div>
          <div class="row last">
            ${LINKS.map((t, i) => html`<button class=${i > 4 ? "news" : ""} style="width:${cellWidth(t)}px">${t}</button>`)}
            <div class="end side"><button>图文F10</button><button>侧边栏&gt;</button></div>
          </div>
        </main>
        <quote-panel></quote-panel>
        <finance-panel></finance-panel>
      </div>
      <site-logo></site-logo>`;
  }
}
